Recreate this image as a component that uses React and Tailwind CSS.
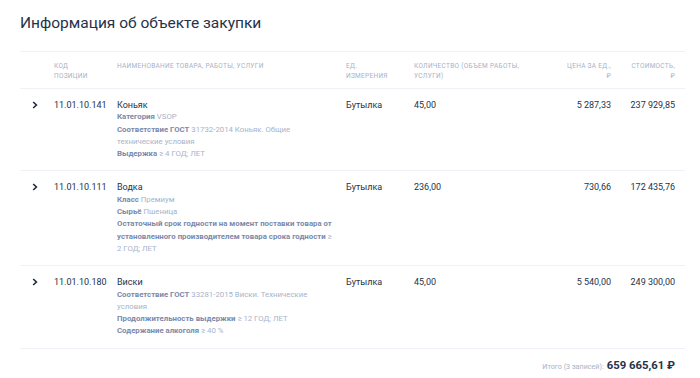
import React from "react";

const rows = [
  {
    code: "11.01.10.141",
    name: "Коньяк",
    details: [
      ["Категория", "VSOP"],
      ["Соответствие ГОСТ", "31732-2014 Коньяк. Общие технические условия"],
      ["Выдержка", "≥ 4 ГОД; ЛЕТ"],
    ],
    unit: "Бутылка",
    qty: "45,00",
    price: "5 287,33",
    cost: "237 929,85",
  },
  {
    code: "11.01.10.111",
    name: "Водка",
    details: [
      ["Класс", "Премиум"],
      ["Сырьё", "Пшеница"],
      [
        "Остаточный срок годности на момент поставки товара от установленного производителем товара срока годности",
        "≥ 2 ГОД; ЛЕТ",
      ],
    ],
    unit: "Бутылка",
    qty: "236,00",
    price: "730,66",
    cost: "172 435,76",
  },
  {
    code: "11.01.10.180",
    name: "Виски",
    details: [
      ["Соответствие ГОСТ", "33281-2015 Виски. Технические условия"],
      ["Продолжительность выдержки", "≥ 12 ГОД; ЛЕТ"],
      ["Содержание алкоголя", "≥ 40 %"],
    ],
    unit: "Бутылка",
    qty: "45,00",
    price: "5 540,00",
    cost: "249 300,00",
  },
];

const cols = "grid grid-cols-[34px_63px_229px_68px_116px_91px_64px]";

function Chevron() {
  return (
    <svg width="6" height="8" viewBox="0 0 6 8" className="mt-[2px] ml-[12px]">
      <path d="M1.2 1 L4.4 4 L1.2 7" fill="none" stroke="#1f2a3c" strokeWidth="1.6" />
    </svg>
  );
}

export default function App() {
  return (
    <div
      className="w-[700px] h-[378px] bg-white overflow-hidden px-[20px] pt-[13px]"
      style={{ fontFamily: "Roboto, 'Liberation Sans', sans-serif" }}
    >
      <h1 className="text-[15.5px] leading-[20px] text-[#26324a] font-normal">
        Информация об объекте закупки
      </h1>
      <div className="mt-[18px] w-[665px]">
        <div
          className={`${cols} border-t border-b border-[#eef1f6] pt-[9px] pb-[7px] text-[6.5px] leading-[10px] tracking-[0.3px] uppercase text-[#a7b2c6]`}
        >
          <div />
          <div>Код<br />позиции</div>
          <div>Наименование товара, работы, услуги</div>
          <div>Ед.<br />измерения</div>
          <div>Количество (объем работы, услуги)</div>
          <div className="text-right pr-[10px]">Цена за ед.,<br />₽</div>
          <div className="text-right pr-[10px]">Стоимость,<br />₽</div>
        </div>
        {rows.map((r) => (
          <div
            key={r.code}
            className={`${cols} border-b border-[#eef1f6] pt-[10px] pb-[10px] text-[9px] leading-[12.3px] text-[#26324a]`}
          >
            <div><Chevron /></div>
            <div>{r.code}</div>
            <div className="pr-[13px]">
              <div>{r.name}</div>
              {r.details.map(([l, v]) => (
                <div key={l} className="text-[7.8px] leading-[12.3px] text-[#a7b3c9]">
                  <span className="font-bold text-[#7a89aa]">{l}</span> {v}
                </div>
              ))}
            </div>
            <div>{r.unit}</div>
            <div>{r.qty}</div>
            <div className="text-right pr-[10px]">{r.price}</div>
            <div className="text-right pr-[10px]">{r.cost}</div>
          </div>
        ))}
        <div className="flex justify-end items-baseline pr-[10px] pt-[9px]">
          <span className="text-[7.2px] text-[#a7b3c9] mr-[3px]">Итого (3 записей):</span>
          <span className="text-[11.3px] font-bold text-[#26324a]">659 665,61 ₽</span>
        </div>
      </div>
    </div>
  );
}
